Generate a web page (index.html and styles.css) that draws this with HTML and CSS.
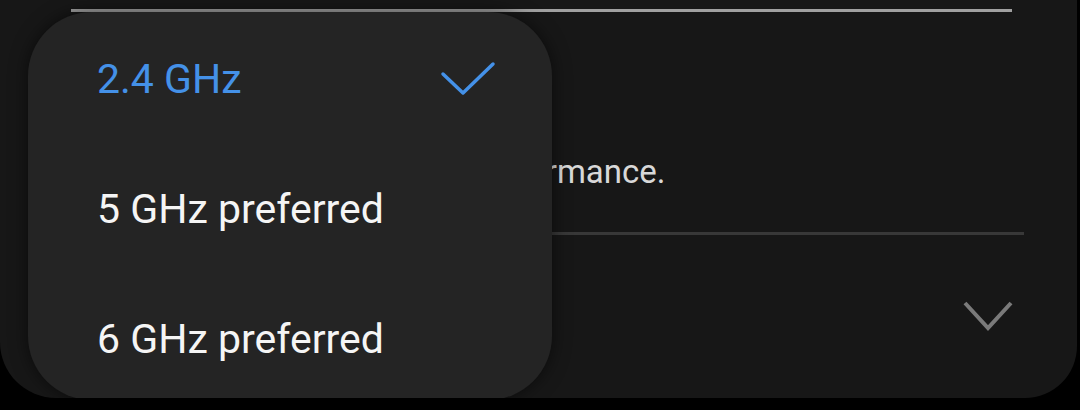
FILE: index.html
```html
<!DOCTYPE html>
<html lang="en">
<head>
    <meta charset="UTF-8">
    <meta name="viewport" content="width=device-width, initial-scale=1.0">
    <title>Wi-Fi band</title>
    <link rel="stylesheet" href="styles.css">
</head>
<body>
    <div class="panel">
        <div class="divider-top"></div>

        <div class="setting">
            <div class="setting-desc">performance.</div>
        </div>

        <div class="divider"></div>

        <div class="setting-row">
            <svg class="chevron" width="52" height="32" viewBox="0 0 52 32">
                <path d="M3 4 L26 29 L49 4" fill="none" stroke="#7a7a7a" stroke-width="4"/>
            </svg>
        </div>

        <!-- Выпадающее меню поверх настроек -->
        <ul class="menu">
            <li class="menu-item selected">
                <span>2.4 GHz</span>
                <svg class="check" width="56" height="36" viewBox="0 0 56 36">
                    <path d="M3 13 L23 32 L53 3" fill="none" stroke="#4491e8" stroke-width="3.5" stroke-linecap="round" stroke-linejoin="round"/>
                </svg>
            </li>
            <li class="menu-item">5 GHz preferred</li>
            <li class="menu-item">6 GHz preferred</li>
        </ul>
    </div>
</body>
</html>
```

FILE: styles.css
```css
body {
    margin: 0;
    background-color: #000;
    font-family: Roboto, "Noto Sans", sans-serif;
}
.panel {
    position: relative;
    width: 1077px;
    height: 398px;
    background-color: #171717;
    border-radius: 0 0 52px 56px;
    overflow: hidden;
}
.divider-top {
    margin: 9px 0 0 71px;
    width: 941px;
    height: 3px;
    background-color: #a0a0a0;
}
.setting {
    padding: 143px 0 0 468px;
}
.setting-desc {
    font-size: 33px;
    line-height: 34px;
    color: #d8d8d8;
}
.divider {
    margin: 43px 53px 0 71px;
    height: 3px;
    background-color: #383838;
}
.setting-row {
    display: flex;
    align-items: center;
    justify-content: flex-end;
    height: 160px;
    padding: 0 63px 0 71px;
}
.menu {
    position: absolute;
    left: 28px;
    top: 12px;
    width: 524px;
    height: 388px;
    margin: 0;
    padding: 2px 0 0;
    box-sizing: border-box;
    list-style: none;
    background-color: #242424;
    border-radius: 64px;
    box-shadow: 0 0 18px rgba(0, 0, 0, 0.55);
    overflow: hidden;
}
.menu-item {
    display: flex;
    align-items: center;
    justify-content: space-between;
    height: 130px;
    padding: 0 56px 0 69px;
    font-size: 41px;
    line-height: 130px;
    color: #f5f5f5;
}
.menu-item.selected {
    color: #4491e8;
}
.check {
    display: block;
}
.chevron {
    display: block;
}
```
